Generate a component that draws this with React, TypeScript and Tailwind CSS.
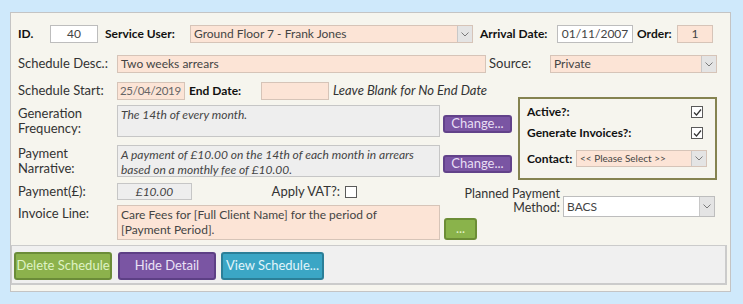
import React from 'react'

// Access-style "Payment Schedule" detail form

const Chevron = () => (
  <svg width="8" height="5" viewBox="0 0 8 5" fill="none">
    <path d="M0.5 0.5 L4 4 L7.5 0.5" stroke="#7a7a7a" strokeWidth="1" />
  </svg>
)

const Check = ({ checked }: { checked: boolean }) => (
  <div className="flex h-[12px] w-[12px] items-center justify-center border border-[#5a5a5a] bg-white">
    {checked && (
      <svg width="9" height="9" viewBox="0 0 9 9" fill="none">
        <path d="M1 4.5 L3.5 7 L8 1.5" stroke="#333" strokeWidth="1.2" />
      </svg>
    )}
  </div>
)

interface FieldProps {
  w: string
  h?: string
  tone?: 'peach' | 'white' | 'grey'
  italic?: boolean
  center?: boolean
  multi?: boolean
  children?: React.ReactNode
}

const toneClass = {
  peach: 'bg-[#fce4d6] border-[#d6c4b8]',
  white: 'bg-white border-[#bdbdbd]',
  grey: 'bg-[#eeeeee] border-[#c6c6c6]',
}

function Field({ w, h = 'h-[18px]', tone = 'peach', italic, center, multi, children }: FieldProps) {
  return (
    <div
      className={`${w} ${h} ${toneClass[tone]} shrink-0 border px-[3px] text-[12px] text-[#444] ${italic ? 'italic' : ''} ${
        multi ? 'pt-[1px] leading-[15px]' : 'flex items-center'
      } ${center ? 'justify-center' : ''}`}
    >
      {children}
    </div>
  )
}

function Combo({ w, h = 'h-[18px]', tone = 'peach', small, children }: { w: string; h?: string; tone?: 'peach' | 'white'; small?: boolean; children: React.ReactNode }) {
  return (
    <div className={`${w} ${h} ${toneClass[tone]} flex shrink-0 items-stretch border`}>
      <div className={`flex flex-1 items-center px-[3px] text-[#444] ${small ? 'text-[10px]' : 'text-[12px]'}`}>{children}</div>
      <div className="flex w-[15px] items-center justify-center border-l border-[#c8c8c8] bg-[#e4e4e4]">
        <Chevron />
      </div>
    </div>
  )
}

const Label = ({ w, bold, children }: { w: string; bold?: boolean; children: React.ReactNode }) => (
  <div className={`${w} shrink-0 ${bold ? 'text-[12px] font-bold text-[#111]' : 'text-[#333]'}`}>{children}</div>
)

const SmallBtn = ({ w, h, color, children }: { w: string; h: string; color: string; children: React.ReactNode }) => (
  <div className={`${w} ${h} ${color} flex shrink-0 items-center justify-center rounded-[3px] border-2`}>{children}</div>
)

export default function App() {
  return (
    <div className="h-[304px] w-[743px] overflow-hidden bg-[#cfe9fb] pl-[10px] pt-[12px] font-['Lato','Open_Sans',sans-serif] text-[13px]">
      <div className="flex h-[280px] w-[721px] flex-col border border-[#c4c4c4] bg-[#f6f5ee]">
        <div className="pl-[7px] pt-[12px]">
          {/* row 1 */}
          <div className="flex h-[18px] items-center">
            <Label w="w-[32px]" bold>ID.</Label>
            <Field w="w-[48px]" tone="white" center>40</Field>
            <div className="w-[7px]" />
            <Label w="w-[85px]" bold>Service User:</Label>
            <Combo w="w-[283px]">Ground Floor 7 - Frank Jones</Combo>
            <div className="w-[7px]" />
            <Label w="w-[77px]" bold>Arrival Date:</Label>
            <Field w="w-[76px]" tone="white" center>01/11/2007</Field>
            <div className="w-[4px]" />
            <Label w="w-[40px]" bold>Order:</Label>
            <Field w="w-[36px]" center>1</Field>
          </div>

          {/* row 2 */}
          <div className="mt-[12px] flex h-[18px] items-center">
            <Label w="w-[99px]">Schedule Desc.:</Label>
            <Field w="w-[369px]">Two weeks arrears</Field>
            <div className="w-[3px]" />
            <Label w="w-[61px]">Source:</Label>
            <Combo w="w-[167px]">Private</Combo>
          </div>

          {/* rows 3-5 + flags box */}
          <div className="mt-[9px] flex items-start">
            <div className="w-[494px] shrink-0">
              <div className="flex h-[18px] items-center">
                <Label w="w-[99px]">Schedule Start:</Label>
                <div className="flex h-[18px] w-[68px] shrink-0 items-center border border-[#d6c4b8] bg-[#fce4d6] px-[2px] text-[11.5px] tracking-[-0.3px] text-[#666]">
                  25/04/2019
                </div>
                <div className="w-[4px]" />
                <Label w="w-[72px]" bold>End Date:</Label>
                <Field w="w-[68px]" />
                <div className="w-[4px]" />
                <span className="italic text-[#333]">Leave Blank for No End Date</span>
              </div>

              <div className="mt-[5px] flex items-start">
                <div className="w-[99px] shrink-0 pt-[1px] leading-[15px] text-[#333]">
                  Generation
                  <br />
                  Frequency:
                </div>
                <Field w="w-[323px]" h="h-[32px]" tone="grey" italic multi>The 14th of every month.</Field>
                <div className="ml-[3px] mt-[10px]">
                  <SmallBtn w="w-[69px]" h="h-[18px]" color="bg-[#7a55a3] border-[#62428a] text-[#e8def4]">Change...</SmallBtn>
                </div>
              </div>

              <div className="mt-[8px] flex items-start">
                <div className="w-[99px] shrink-0 pt-[1px] leading-[15px] text-[#333]">
                  Payment
                  <br />
                  Narrative:
                </div>
                <Field w="w-[323px]" h="h-[32px]" tone="grey" italic multi>
                  A payment of £10.00 on the 14th of each month in arrears
                  <br />
                  based on a monthly fee of £10.00.
                </Field>
                <div className="ml-[3px] mt-[10px]">
                  <SmallBtn w="w-[69px]" h="h-[18px]" color="bg-[#7a55a3] border-[#62428a] text-[#e8def4]">Change...</SmallBtn>
                </div>
              </div>
            </div>

            <div className="ml-[6px] mt-[15px] h-[83px] w-[199px] shrink-0 border-2 border-[#858350] pl-[7px] pr-[8px] pt-[5px]">
              <div className="flex h-[16px] items-center justify-between pr-[4px]">
                <span className="text-[12px] font-bold text-[#111]">Active?:</span>
                <Check checked />
              </div>
              <div className="mt-[5px] flex h-[16px] items-center justify-between pr-[4px]">
                <span className="text-[12px] font-bold text-[#111]">Generate Invoices?:</span>
                <Check checked />
              </div>
              <div className="mt-[9px] flex h-[17px] items-center">
                <Label w="w-[49px]" bold>Contact:</Label>
                <Combo w="w-[131px]" h="h-[17px]" small>&lt;&lt; Please Select &gt;&gt;</Combo>
              </div>
            </div>
          </div>

          {/* rows 6-7 + planned payment */}
          <div className="mt-[3px] flex items-start">
            <div className="w-[426px] shrink-0">
              <div className="flex h-[17px] items-center">
                <Label w="w-[99px]">Payment(£):</Label>
                <Field w="w-[75px]" h="h-[17px]" tone="grey" italic center>£10.00</Field>
                <div className="flex w-[165px] shrink-0 items-center justify-end gap-[5px]">
                  <span className="text-[#333]">Apply VAT?:</span>
                  <Check checked={false} />
                </div>
              </div>
              <div className="mt-[5px] flex items-start">
                <div className="w-[99px] shrink-0 pt-[1px] leading-[15px] text-[#333]">Invoice Line:</div>
                <Field w="w-[323px]" h="h-[35px]" multi>
                  Care Fees for [Full Client Name] for the period of
                  <br />
                  [Payment Period].
                </Field>
              </div>
            </div>

            <div className="w-[116px] shrink-0">
              <div className="ml-auto mt-[4px] w-[104px] text-right text-[12.5px] leading-[14px] text-[#333]">
                Planned Payment
                <br />
                Method:
              </div>
              <div className="mt-[3px]">
                <SmallBtn w="w-[33px]" h="h-[22px]" color="bg-[#8ab34b] border-[#6c8d36] text-[#e4f3cc]">...</SmallBtn>
              </div>
            </div>

            <div className="ml-[3px] mt-[13px]">
              <Combo w="w-[152px]" h="h-[21px]" tone="white">BACS</Combo>
            </div>
          </div>
        </div>

        {/* footer buttons */}
        <div className="mt-[5px] flex h-[40px] w-[716px] items-start border border-b-2 border-r-2 border-[#cbcbcb] bg-[#f0f0f0] pl-[2px] pt-[6px]">
          <SmallBtn w="w-[98px]" h="h-[28px]" color="bg-[#8cb24c] border-[#6b8c38] text-[#dff2c4]">Delete Schedule</SmallBtn>
          <div className="w-[6px]" />
          <SmallBtn w="w-[98px]" h="h-[28px]" color="bg-[#7a55a3] border-[#5d3f85] text-[#ebe2f6]">Hide Detail</SmallBtn>
          <div className="w-[5px]" />
          <SmallBtn w="w-[103px]" h="h-[28px]" color="bg-[#3ba6c5] border-[#2b7f98] text-[#e2f5fb]">View Schedule...</SmallBtn>
        </div>
      </div>
    </div>
  )
}
